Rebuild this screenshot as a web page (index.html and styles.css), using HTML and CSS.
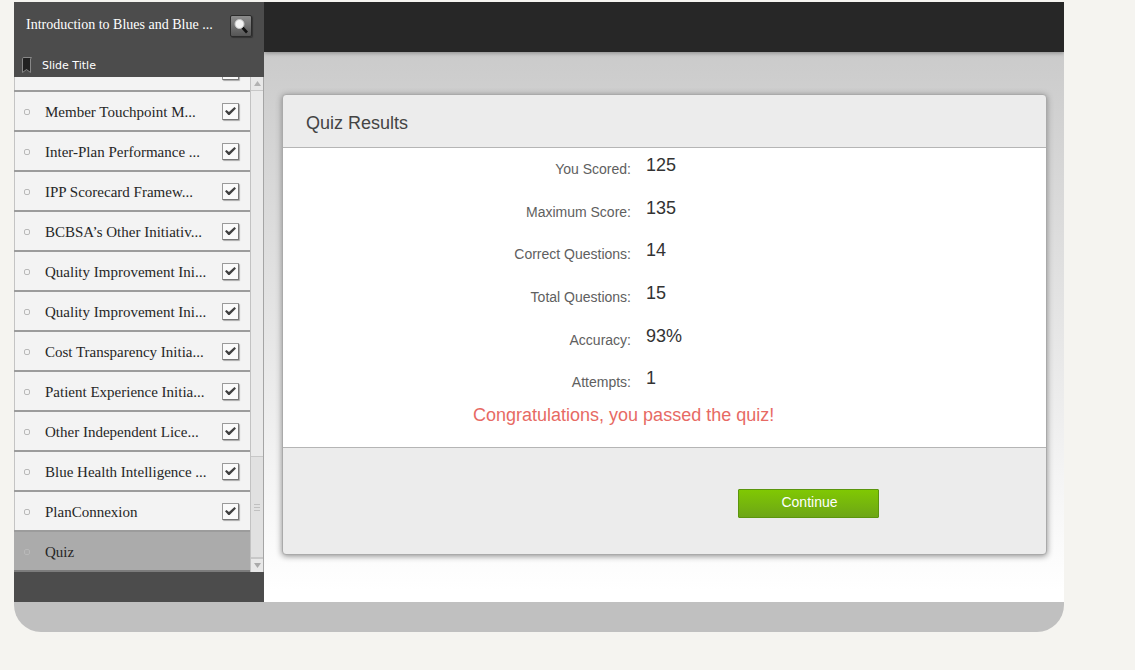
FILE: index.html
```html
<!DOCTYPE html>
<html lang="en">
<head>
<meta charset="utf-8">
<title>Quiz Results</title>
<link rel="stylesheet" href="styles.css">
</head>
<body>
<div class="player">
  <div class="columns">
    <aside class="sidebar">
      <header class="sidebar-head">
        <span class="course">Introduction to Blues and Blue ...</span>
        <button class="search" type="button" aria-label="Search">
          <svg width="16" height="16" viewBox="0 0 16 16">
            <path d="M8.500 8.500l5.500 6" stroke="#111" stroke-width="2.600"/>
            <circle cx="6.500" cy="6" r="4.500" fill="#f4f4f4" stroke="#c8c8c8"/>
          </svg>
        </button>
      </header>
      <div class="list-title">
        <svg width="12" height="18" viewBox="0 0 12 18">
          <path d="M1.500 16.500V2.500Q1.500 1.500 3 1.500H10.500L9.500 3V16.500L5.500 13.500Z" fill="#222" stroke="#888"/>
        </svg>
        <span class="list-label">Slide Title</span>
      </div>
      <div class="list-area">
        <ul class="slides">
          <li class="slide"><input class="tick" type="checkbox" aria-label="Previous slide" checked></li>
          <li class="slide"><span class="dot"></span><label class="name" for="s1">Member Touchpoint M...</label><input class="tick" id="s1" type="checkbox" checked></li>
          <li class="slide"><span class="dot"></span><label class="name" for="s2">Inter-Plan Performance ...</label><input class="tick" id="s2" type="checkbox" checked></li>
          <li class="slide"><span class="dot"></span><label class="name" for="s3">IPP Scorecard Framew...</label><input class="tick" id="s3" type="checkbox" checked></li>
          <li class="slide"><span class="dot"></span><label class="name" for="s4">BCBSA’s Other Initiativ...</label><input class="tick" id="s4" type="checkbox" checked></li>
          <li class="slide"><span class="dot"></span><label class="name" for="s5">Quality Improvement Ini...</label><input class="tick" id="s5" type="checkbox" checked></li>
          <li class="slide"><span class="dot"></span><label class="name" for="s6">Quality Improvement Ini...</label><input class="tick" id="s6" type="checkbox" checked></li>
          <li class="slide"><span class="dot"></span><label class="name" for="s7">Cost Transparency Initia...</label><input class="tick" id="s7" type="checkbox" checked></li>
          <li class="slide"><span class="dot"></span><label class="name" for="s8">Patient Experience Initia...</label><input class="tick" id="s8" type="checkbox" checked></li>
          <li class="slide"><span class="dot"></span><label class="name" for="s9">Other Independent Lice...</label><input class="tick" id="s9" type="checkbox" checked></li>
          <li class="slide"><span class="dot"></span><label class="name" for="s10">Blue Health Intelligence ...</label><input class="tick" id="s10" type="checkbox" checked></li>
          <li class="slide"><span class="dot"></span><label class="name" for="s11">PlanConnexion</label><input class="tick" id="s11" type="checkbox" checked></li>
          <li class="slide current"><span class="dot"></span><span class="name">Quiz</span></li>
        </ul>
        <div class="scrollbar">
          <button class="arrow up" type="button" aria-label="Scroll up"><svg width="7" height="5" viewBox="0 0 7 5"><path d="M0 5L3.500 0L7 5Z" fill="#b2b2b2"/></svg></button>
          <div class="track"><div class="thumb"><span></span><span></span><span></span></div></div>
          <button class="arrow down" type="button" aria-label="Scroll down"><svg width="7" height="5" viewBox="0 0 7 5"><path d="M0 0H7L3.500 5Z" fill="#aaa"/></svg></button>
        </div>
      </div>
      <div class="sidebar-foot"></div>
    </aside>
    <main class="main">
      <div class="topbar"></div>
      <div class="stage">
        <section class="card">
          <h1 class="card-title">Quiz Results</h1>
          <div class="card-body">
            <dl class="results">
              <div class="result"><dt>You Scored:</dt><dd>125</dd></div>
              <div class="result"><dt>Maximum Score:</dt><dd>135</dd></div>
              <div class="result"><dt>Correct Questions:</dt><dd>14</dd></div>
              <div class="result"><dt>Total Questions:</dt><dd>15</dd></div>
              <div class="result"><dt>Accuracy:</dt><dd>93%</dd></div>
              <div class="result"><dt>Attempts:</dt><dd>1</dd></div>
            </dl>
            <p class="message">Congratulations, you passed the quiz!</p>
          </div>
          <div class="card-foot"><button class="continue" type="button">Continue</button></div>
        </section>
      </div>
    </main>
  </div>
  <div class="playbar"></div>
</div>
</body>
</html>
```
FILE: styles.css
```css
* { box-sizing: border-box; }
body {
  margin: 0;
  padding: 2px 71px 38px 14px;
  background: #f5f4f0;
  font-family: "Liberation Sans", Arial, sans-serif;
}
button { padding: 0; border: 0; background: none; }
svg { display: block; fill: none; }
.columns { display: flex; }

.sidebar { display: flex; flex-direction: column; flex: 0 0 250px; background: #4c4c4c; }
.sidebar-head {
  display: flex;
  align-items: center;
  justify-content: space-between;
  height: 50px;
  padding: 0 12px 2px;
  color: #fff;
}
.course { padding-bottom: 2px; font: 14px/20px "Liberation Serif", serif; }
.search {
  display: grid;
  place-items: center;
  width: 22px;
  height: 22px;
  border: 1px solid #2b2b2b;
  border-radius: 2px;
  background: linear-gradient(#8d8d8d, #555);
  box-shadow: 1px 1px 1px #333;
}
.list-title {
  display: flex;
  align-items: center;
  gap: 9px;
  height: 25px;
  padding-left: 7px;
  color: #fff;
  font: 11px/16px "DejaVu Sans", Verdana, sans-serif;
}
.list-label { padding-top: 2px; }
.list-area { display: flex; height: 495px; background: #f3f3f3; }
.slides {
  display: flex;
  flex: 1;
  flex-direction: column;
  justify-content: flex-end;
  min-width: 0;
  margin: 0;
  padding: 0;
  overflow: hidden;
  list-style: none;
}
.slide {
  display: flex;
  flex: 0 0 40px;
  align-items: center;
  padding: 0 11px 0 10px;
  border-bottom: 2px solid #9c9c9c;
  box-shadow: inset 1px 0 #c4c4c4;
}
.slide.current { border-color: #7c7c7c; background: #ababab; box-shadow: none; }
.dot { width: 6px; height: 6px; margin: 2px 15px 0 0; border: 1px solid #b9b9b9; border-radius: 2px; }
.name { padding-top: 2px; color: #262626; font: 15px/20px "Liberation Serif", serif; white-space: nowrap; }
.tick {
  display: grid;
  place-items: center;
  width: 17px;
  height: 17px;
  margin: 0 0 0 auto;
  appearance: none;
  border: 1px solid;
  border-color: #999 #777 #777 #999;
  border-radius: 1px;
  background: #fafafa;
  box-shadow: 1px 1px 1px #aaa;
}
.tick:checked::before {
  content: "";
  width: 11px;
  height: 8px;
  background: #404040;
  clip-path: polygon(0 52%, 14% 38%, 36% 64%, 86% 0, 100% 18%, 42% 100%, 30% 100%);
}
.scrollbar {
  display: flex;
  flex: 0 0 14px;
  flex-direction: column;
  border: solid #c2c2c2;
  border-width: 0 1px;
  border-right-color: #a5a5a5;
  background: #eaeaea;
}
.arrow { display: grid; place-items: center; height: 14px; background: #e8e8e8; }
.up { border-bottom: 1px solid #c8c8c8; }
.down { height: 13px; }
.track { display: flex; flex: 1; flex-direction: column; justify-content: flex-end; }
.thumb {
  display: flex;
  flex-direction: column;
  align-items: center;
  justify-content: center;
  gap: 2px;
  height: 103px;
  border: solid #c8c8c8;
  border-width: 1px 0 2px;
  background: #e1e1e1;
}
.thumb span { width: 6px; height: 1px; background: #c0c0c0; }
.sidebar-foot { height: 30px; }

.main { display: flex; flex: 1; flex-direction: column; min-width: 0; overflow: hidden; }
.topbar { z-index: 1; height: 50px; background: #272727; box-shadow: 0 1px 4px #888; }
.stage { flex: 1; padding: 42px 17px 47px 18px; background: linear-gradient(#cbcbcb, #fff 98%); }
.card {
  border: 1px solid #aaa;
  border-radius: 4px;
  background: #ececec;
  box-shadow: 0 1px 6px #888;
}
.card-title {
  height: 52px;
  margin: 0;
  padding: 17px 23px 0;
  color: #444;
  font-size: 18px;
  font-weight: 400;
  line-height: 22px;
}
.card-body { height: 301px; border: solid #b5b5b5; border-width: 1px 0; background: #fff; }
.results { display: grid; grid-auto-rows: 1fr; height: 256px; margin: 0; }
.result { display: grid; grid-template-columns: 348px 1fr; column-gap: 15px; padding-top: 6px; }
dt { padding-top: 5px; color: #606060; font-size: 14px; line-height: 20px; text-align: right; }
dd { margin: 0; color: #333; font-size: 18px; line-height: 22px; }
.message { margin: 0; padding-left: 190px; color: #e76a64; font-size: 18px; line-height: 22px; }
.card-foot { height: 106px; padding: 41px 167px 0 0; text-align: right; }
.continue {
  width: 141px;
  height: 29px;
  padding: 0 0 3px 2px;
  border: 1px solid #5b950d;
  border-radius: 1px;
  background: linear-gradient(#80c803, #6da616);
  color: #fff;
  font: 14px/20px "Liberation Sans", Arial, sans-serif;
}
.playbar { height: 30px; border-radius: 0 0 27px 27px; background: #c0c0c0; }
```
